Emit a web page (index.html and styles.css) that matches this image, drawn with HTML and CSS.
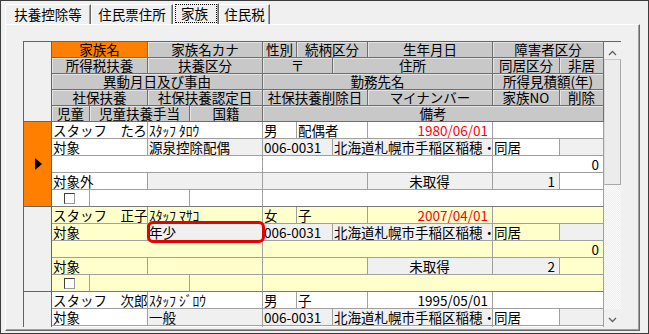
FILE: index.html
```html
<!DOCTYPE html>
<html lang="ja">
<head>
<meta charset="utf-8">
<link rel="stylesheet" href="styles.css">
</head>
<body>
<div class="frame">
  <div class="tabs">
    <div class="tab t1">扶養控除等</div>
    <div class="tab t2">住民票住所</div>
    <div class="tab t3 active"><span class="focus">家族</span></div>
    <div class="tab t4">住民税</div>
  </div>
  <div class="panel">
    <div class="grid">
      <div class="selector">
        <div class="sel-head"></div>
        <div class="sel-rec current">
          <svg width="7" height="12" viewBox="0 0 7 12"><polygon points="0,0 7,6 0,12" fill="#000"/></svg>
        </div>
        <div class="sel-rec"></div>
        <div class="sel-rec"></div>
      </div>
      <div class="body">
        <div class="head">
          <div class="h orange c1-3">家族名</div>
          <div class="h c3-5">家族名カナ</div>
          <div class="h c5-6">性別</div>
          <div class="h c6-8">続柄区分</div>
          <div class="h c8-9">生年月日</div>
          <div class="h c9-11">障害者区分</div>

          <div class="h c1-3">所得税扶養</div>
          <div class="h c3-5">扶養区分</div>
          <div class="h c5-7">〒</div>
          <div class="h c7-9">住所</div>
          <div class="h c9-10">同居区分</div>
          <div class="h c10-11">非居</div>

          <div class="h c1-5">異動月日及び事由</div>
          <div class="h c5-9">勤務先名</div>
          <div class="h c9-11">所得見積額(年)</div>

          <div class="h c1-3">社保扶養</div>
          <div class="h c3-5">社保扶養認定日</div>
          <div class="h c5-8">社保扶養削除日</div>
          <div class="h c8-9">マイナンバー</div>
          <div class="h c9-10">家族NO</div>
          <div class="h c10-11">削除</div>

          <div class="h c1-2">児童</div>
          <div class="h c2-4">児童扶養手当</div>
          <div class="h c4-5">国籍</div>
          <div class="h c5-11">備考</div>
        </div>

        <div class="rec">
          <div class="d clip c1-3">スタッフ　たろう</div>
          <div class="d c3-5">ｽﾀｯﾌ ﾀﾛｳ</div>
          <div class="d c5-6">男</div>
          <div class="d c6-8">配偶者</div>
          <div class="d c8-9 r red">1980/06/01</div>
          <div class="d c9-11"></div>

          <div class="d c1-3">対象</div>
          <div class="d c3-5 g">源泉控除配偶</div>
          <div class="d c5-7 g">006-0031</div>
          <div class="d clip c7-9 g">北海道札幌市手稲区稲穂・</div>
          <div class="d c9-10">同居</div>
          <div class="d c10-11 g"></div>

          <div class="d c1-5"></div>
          <div class="d c5-9"></div>
          <div class="d c9-11 r">0</div>

          <div class="d c1-3">対象外</div>
          <div class="d c3-5 g"></div>
          <div class="d c5-8 g"></div>
          <div class="d c8-9 g c">未取得</div>
          <div class="d c9-10 g r">1</div>
          <div class="d c10-11"></div>

          <div class="d last c1-2 chk"><span class="box"></span></div>
          <div class="d last c2-4"></div>
          <div class="d last c4-5"></div>
          <div class="d last c5-11"></div>
        </div>

        <div class="rec yellow">
          <div class="d clip c1-3">スタッフ　正子</div>
          <div class="d c3-5">ｽﾀｯﾌ ﾏｻｺ</div>
          <div class="d c5-6">女</div>
          <div class="d c6-8">子</div>
          <div class="d c8-9 r red">2007/04/01</div>
          <div class="d c9-11"></div>

          <div class="d c1-3">対象</div>
          <div class="d c3-5 g">年少</div>
          <div class="d c5-7 g">006-0031</div>
          <div class="d clip c7-9 g">北海道札幌市手稲区稲穂・</div>
          <div class="d c9-10">同居</div>
          <div class="d c10-11 g"></div>

          <div class="d c1-5"></div>
          <div class="d c5-9"></div>
          <div class="d c9-11 r">0</div>

          <div class="d c1-3">対象</div>
          <div class="d c3-5"></div>
          <div class="d c5-8"></div>
          <div class="d c8-9 g c">未取得</div>
          <div class="d c9-10 g r">2</div>
          <div class="d c10-11"></div>

          <div class="d last c1-2 chk"><span class="box"></span></div>
          <div class="d last c2-4"></div>
          <div class="d last c4-5"></div>
          <div class="d last c5-11"></div>
        </div>

        <div class="rec">
          <div class="d clip c1-3">スタッフ　次郎</div>
          <div class="d c3-5">ｽﾀｯﾌ ｼﾞﾛｳ</div>
          <div class="d c5-6">男</div>
          <div class="d c6-8">子</div>
          <div class="d c8-9 r">1995/05/01</div>
          <div class="d c9-11"></div>

          <div class="d c1-3">対象</div>
          <div class="d c3-5 g">一般</div>
          <div class="d c5-7 g">006-0031</div>
          <div class="d clip c7-9 g">北海道札幌市手稲区稲穂・</div>
          <div class="d c9-10">同居</div>
          <div class="d c10-11 g"></div>

          <div class="d c1-5"></div>
          <div class="d c5-9"></div>
          <div class="d c9-11 r">0</div>
        </div>
      </div>
      <div class="scrollbar">
        <div class="sb-btn up">
          <svg width="9" height="6" viewBox="0 0 9 6"><polyline points="1,5 4.5,1.5 8,5" fill="none" stroke="#606060" stroke-width="1.3"/></svg>
        </div>
        <div class="sb-thumb"></div>
        <div class="sb-track"></div>
        <div class="sb-btn down">
          <svg width="9" height="6" viewBox="0 0 9 6"><polyline points="1,1 4.5,4.5 8,1" fill="none" stroke="#606060" stroke-width="1.3"/></svg>
        </div>
      </div>
    </div>
  </div>
  <div class="callout"></div>
</div>
</body>
</html>
```

FILE: styles.css
```css
* {
  box-sizing: border-box;
}

body {
  margin: 0;
  font-family: "Noto Sans CJK JP", "Noto Sans CJK SC", sans-serif;
  font-size: 13.5px;
  color: #000;
  background: #f0f0f0;
}

.frame {
  position: relative;
  width: 649px;
  height: 334px;
  border: 1px solid #3c3c3c;
  background: #f0f0f0;
  overflow: hidden;
}

/* tabs */
.tabs {
  display: flex;
  align-items: flex-end;
  height: 23px;
  padding-left: 4px;
}

.tab {
  height: 20px;
  line-height: 18px;
  text-align: center;
  white-space: nowrap;
  border-top: 1px solid #fff;
  border-left: 1px solid #fff;
  border-right: 1px solid #696969;
  box-shadow: inset -1px 0 0 #a0a0a0;
}

.t1 { width: 86px; }
.t2 { width: 82px; }
.t3 { width: 46px; }
.t4 { width: 51px; }

.tab.active {
  height: 21px;
  padding: 0 1px 1px 1px;
}

.focus {
  display: block;
  height: 19px;
  line-height: 17px;
  border: 1px dotted #000;
  padding-right: 3px;
}

/* panel */
.panel {
  margin-left: 4px;
  width: 635px;
  height: 307px;
  border-top: 1px solid #fff;
  border-left: 1px solid #fff;
  border-right: 1px solid #696969;
  border-bottom: 1px solid #696969;
  box-shadow: inset -1px -1px 0 #a0a0a0;
  padding: 16px 0 0 17px;
  overflow: hidden;
}

/* grid */
.grid {
  display: flex;
  width: 598px;
  height: 286px;
  border-left: 1px solid #646464;
  border-top: 1px solid #646464;
  overflow: hidden;
  background: #fff;
}

.selector {
  flex: none;
  width: 28px;
  border-right: 1px solid #646464;
  background: #f0f0f0;
}

.sel-head {
  height: 80px;
  border-bottom: 1px solid #646464;
  background: #f0f0f0;
}

.sel-rec {
  height: 85px;
  border-bottom: 1px solid #646464;
  background: #f0f0f0;
  display: flex;
  align-items: center;
  justify-content: center;
  padding-left: 2px;
}

.sel-rec.current {
  background: #ff8000;
}

.body {
  flex: none;
  width: 552px;
}

.head,
.rec {
  display: grid;
  grid-template-columns: 38px 58px 42px 73px 34px 36px 35px 125px 67px 44px;
}

.head {
  grid-template-rows: repeat(5, 16px);
}

.rec {
  grid-template-rows: repeat(5, 17px);
  background: #fff;
}

.c1-2 { grid-column: 1 / 2; }
.c1-3 { grid-column: 1 / 3; }
.c1-5 { grid-column: 1 / 5; }
.c2-4 { grid-column: 2 / 4; }
.c3-5 { grid-column: 3 / 5; }
.c4-5 { grid-column: 4 / 5; }
.c5-6 { grid-column: 5 / 6; }
.c5-7 { grid-column: 5 / 7; }
.c5-8 { grid-column: 5 / 8; }
.c5-9 { grid-column: 5 / 9; }
.c5-11 { grid-column: 5 / 11; }
.c6-8 { grid-column: 6 / 8; }
.c7-9 { grid-column: 7 / 9; }
.c8-9 { grid-column: 8 / 9; }
.c9-10 { grid-column: 9 / 10; }
.c9-11 { grid-column: 9 / 11; }
.c10-11 { grid-column: 10 / 11; }

.h {
  background: #c8c8c8;
  border-right: 1px solid #6e6e6e;
  border-bottom: 1px solid #6e6e6e;
  box-shadow: inset 1px 1px 0 #e4e4e4;
  text-align: center;
  line-height: 15px;
  white-space: nowrap;
}

.h.orange {
  background: #ff8000;
  box-shadow: none;
}

.d {
  background: #fff;
  border-right: 1px solid #a0a0a0;
  border-bottom: 1px solid #a0a0a0;
  padding: 0 2px 0 1px;
  line-height: 16px;
  white-space: nowrap;
}

.d.clip {
  overflow: hidden;
}

.d.last {
  border-bottom-color: #7a7a7a;
}

.yellow .d {
  background: #ffffcc;
}

.d.g,
.yellow .d.g {
  background: #f0f0f0;
}

.d.r {
  text-align: right;
  padding-right: 4px;
}

.d.c {
  text-align: center;
}

.red {
  color: #ff0000;
}

.chk {
  display: flex;
  align-items: center;
  justify-content: center;
  padding: 0 3px 0 0;
}

.box {
  width: 11px;
  height: 11px;
  background: #fff;
  border-top: 1px solid #404040;
  border-left: 1px solid #404040;
  border-right: 1px solid #9a9a9a;
  border-bottom: 1px solid #9a9a9a;
}

/* scrollbar */
.scrollbar {
  flex: none;
  width: 17px;
  display: flex;
  flex-direction: column;
  background: #f0f0f0;
}

.sb-btn {
  flex: none;
  height: 17px;
  display: flex;
  justify-content: center;
  background: #f0f0f0;
}

.sb-btn.up {
  align-items: flex-start;
  padding-top: 8px;
}

.sb-btn.down {
  height: 18px;
  align-items: flex-start;
  padding-top: 8px;
}

.sb-thumb {
  flex: none;
  height: 126px;
  background: #ececec;
  border-left: 1px solid #dadada;
  border-right: 1px solid #a8a8a8;
  border-bottom: 1px solid #a8a8a8;
  border-top: 1px solid #c8c8c8;
}

.sb-track {
  flex: 1;
  background: repeating-conic-gradient(#fbfbfb 0 25%, #eeeeee 0 50%) 0 0 / 2px 2px;
}

/* annotation */
.callout {
  position: absolute;
  left: 146px;
  top: 220px;
  width: 118px;
  height: 22px;
  border: 3px solid #e60000;
  border-radius: 6px;
}
```
